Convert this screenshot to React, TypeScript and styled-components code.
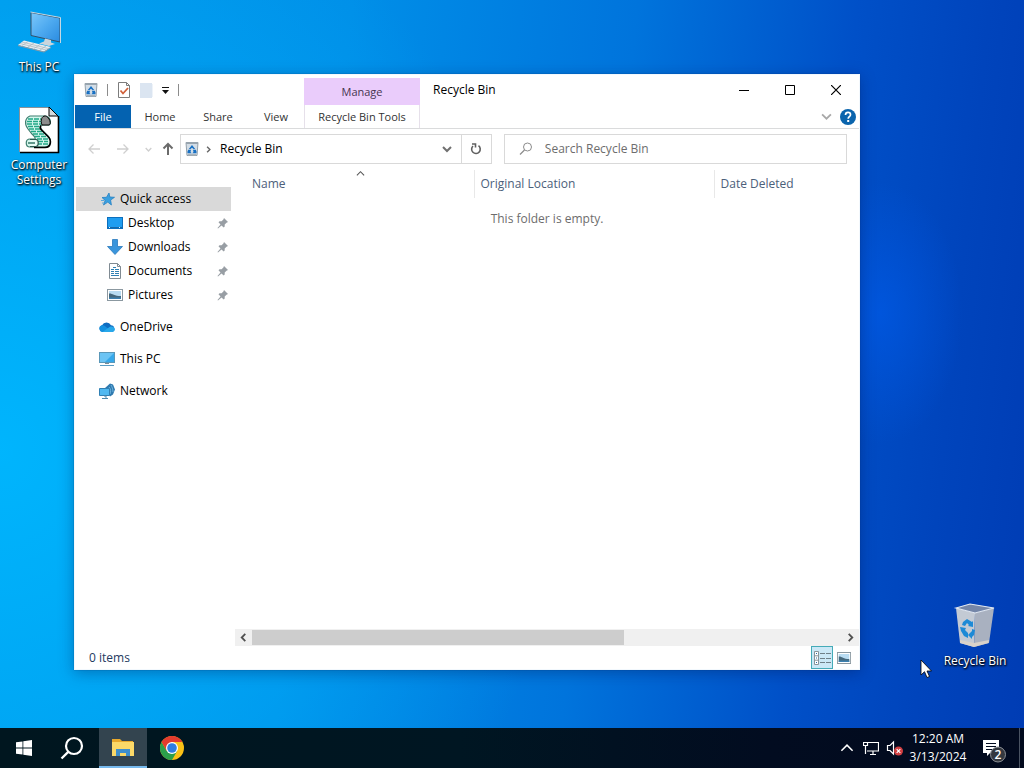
import React from "react";
import styled, { createGlobalStyle, css } from "styled-components";

const GlobalStyle = createGlobalStyle`
  *, *::before, *::after { box-sizing: border-box; }
  html, body, #root { height: 100%; }
  body {
    margin: 0;
    overflow: hidden;
    font-family: "Open Sans", "Noto Sans", "Liberation Sans", sans-serif;
    font-size: 12px;
    line-height: 16px;
    color: #000;
  }
  button, input { font: inherit; color: inherit; }
  svg { display: block; flex: none; }
`;

const Screen = styled.div`
  display: flex;
  flex-direction: column;
  height: 100vh;
`;

const Desktop = styled.main`
  position: relative;
  flex: 1;
  min-height: 0;
  background:
    radial-gradient(ellipse 8% 18% at 86% 43%, rgba(0, 92, 236, 0.6), rgba(0, 92, 236, 0) 100%),
    radial-gradient(ellipse 55% 85% at 0% 62%, rgba(0, 184, 255, 0.9), rgba(0, 184, 255, 0) 100%),
    linear-gradient(96deg, #0098ea 0%, #008fe8 32%, #0074dc 58%, #0050c8 78%, #0044bc 90%, #003cb4 100%);
`;

const Shortcut = styled.button<{ $spot: "pc" | "settings" | "bin" }>`
  position: absolute;
  display: flex;
  flex-direction: column;
  align-items: center;
  gap: 3px;
  width: 74px;
  padding: 0;
  border: 0;
  background: none;
  color: #fff;
  line-height: 15px;
  text-shadow: 1px 1px 2px #000, 0 1px 2px #000;
  ${({ $spot }) =>
    $spot === "pc"
      ? css`left: 2px; top: 8px;`
      : $spot === "settings"
      ? css`left: 2px; top: 106px;`
      : css`right: 12px; bottom: 60px;`}
`;

const Pointer = styled.div`
  position: absolute;
  right: 92px;
  bottom: 49px;
`;

const Window = styled.section`
  position: absolute;
  left: 74px;
  right: 164px;
  top: 74px;
  bottom: 58px;
  display: flex;
  flex-direction: column;
  border: 1px solid #f2f8fd;
  background: #fff;
  box-shadow: 0 0 1px rgba(0, 40, 100, 0.6), 0 3px 14px rgba(0, 20, 80, 0.35);
`;

const Ribbon = styled.header`
  display: grid;
  grid-template-columns: 229px 116px 1fr;
  grid-template-rows: 30px 23px;
  border-bottom: 1px solid #dadbdc;
`;

const QuickBar = styled.div`
  display: flex;
  align-items: center;
  gap: 9px;
  padding-left: 9px;
`;

const Divider = styled.span`
  width: 1px;
  height: 12px;
  background: #8c8c8c;
`;

const PlainButton = styled.button<{ $width?: number }>`
  display: flex;
  align-items: center;
  justify-content: center;
  width: ${({ $width }) => ($width ? `${$width}px` : "auto")};
  padding: 0;
  border: 0;
  background: none;
`;

const Tabs = styled.nav`
  grid-row: 2;
  display: flex;
`;

const Tab = styled.button<{ $active?: boolean }>`
  flex: 0 0 ${({ $active }) => ($active ? 56 : 58)}px;
  padding: 0;
  border: 0;
  background: ${({ $active }) => ($active ? "#0462b0" : "none")};
  color: ${({ $active }) => ($active ? "#fff" : "#333")};
  font-size: 11px;
`;

const Contextual = styled.div`
  grid-column: 2;
  grid-row: 1 / 3;
  display: flex;
  flex-direction: column;
  padding-top: 3px;
`;

const ContextGroup = styled.div`
  flex: 0 0 27px;
  background: #eaccfb;
  color: #46354f;
  font-size: 11px;
  line-height: 27px;
  text-align: center;
`;

const ContextTab = styled.button`
  flex: 1;
  padding: 0;
  border: 1px solid #e6e0ea;
  border-width: 0 1px;
  background: #fff;
  color: #333;
  font-size: 11px;
`;

const TitleRow = styled.div`
  grid-column: 3;
  display: flex;
`;

const Title = styled.h1`
  flex: 1;
  margin: 0;
  padding-left: 13px;
  font-size: 12px;
  font-weight: 400;
  line-height: 30px;
`;

const HelpRow = styled.div`
  grid-column: 3;
  display: flex;
  align-items: center;
  justify-content: flex-end;
  gap: 8px;
  padding-right: 3px;
`;

const AddressRow = styled.div`
  display: flex;
  flex: 0 0 41px;
  align-items: center;
  padding: 0 12px 1px 5px;
`;

const AddressBox = styled.div`
  display: flex;
  flex: 316 1 0;
  align-items: center;
  height: 30px;
  margin: 0 12px 0 2px;
  padding-left: 4px;
  border: 1px solid #d9d9d9;
`;

const Crumb = styled.span`
  flex: 1;
  padding-left: 3px;
`;

const RefreshCell = styled.div`
  display: flex;
  justify-content: center;
  align-self: stretch;
  width: 30px;
  border-left: 1px solid #d9d9d9;
`;

const SearchBox = styled.label`
  display: flex;
  flex: 338 1 0;
  align-items: center;
  gap: 12px;
  height: 30px;
  padding-left: 14px;
  border: 1px solid #d9d9d9;
`;

const SearchInput = styled.input`
  flex: 1;
  min-width: 0;
  padding: 0;
  border: 0;
  outline: 0;
  background: none;
  &::placeholder { color: #6d6d6d; opacity: 1; }
`;

const Body = styled.div`
  display: flex;
  flex: 1;
  min-height: 0;
`;

const Sidebar = styled.nav`
  flex: 0 0 160px;
  padding: 17px 4px 0 1px;
`;

const NavList = styled.ul`
  margin: 0;
  padding: 0;
  list-style: none;
`;

const NavItem = styled.li<{ $spaced?: boolean }>`
  margin-top: ${({ $spaced }) => ($spaced ? 8 : 0)}px;
`;

const NavLink = styled.a<{ $child?: boolean; $selected?: boolean }>`
  display: flex;
  align-items: center;
  gap: 5px;
  height: 24px;
  padding-left: ${({ $child }) => ($child ? 31 : 23)}px;
  padding-right: 2px;
  background: ${({ $selected }) => ($selected ? "#d9d9d9" : "none")};
  color: #000;
  text-decoration: none;
`;

const NavText = styled.span`
  flex: 1;
`;

const Content = styled.div`
  display: flex;
  flex: 1;
  flex-direction: column;
  min-width: 0;
`;

const Files = styled.table`
  margin-left: 11px;
  border-collapse: collapse;
  table-layout: fixed;
`;

const Heading = styled.th<{ $width?: number }>`
  position: relative;
  width: ${({ $width }) => ($width ? `${$width}px` : "auto")};
  height: 28px;
  padding: 0 6px;
  border-right: ${({ $width }) => ($width ? "1px solid #e8e8e8" : "0")};
  color: #4c607a;
  font-weight: 400;
  text-align: left;
`;

const SortMark = styled.span`
  position: absolute;
  top: -1px;
  left: 50%;
  margin-left: -4px;
`;

const Empty = styled.p`
  flex: 1;
  margin: 0;
  padding-top: 13px;
  color: #6d6d6d;
  text-align: center;
`;

const ScrollBar = styled.div`
  display: flex;
  height: 17px;
  background: #f0f0f0;
`;

const Track = styled.div`
  flex: 1;
  display: flex;
`;

const Thumb = styled.div`
  width: 63%;
  margin: 1px 0;
  background: #cdcdcd;
`;

const StatusBar = styled.footer`
  display: flex;
  flex: 0 0 23px;
  align-items: center;
  padding: 0 4px 0 14px;
  color: #1e3a5f;
`;

const StatusText = styled.span`
  flex: 1;
`;

const ViewButton = styled.button<{ $on?: boolean }>`
  display: flex;
  align-items: center;
  justify-content: center;
  width: 22px;
  height: 23px;
  padding: 0;
  border: 1px solid ${({ $on }) => ($on ? "#45abb8" : "transparent")};
  background: ${({ $on }) => ($on ? "#cbe8f6" : "none")};
`;

const Taskbar = styled.footer`
  display: flex;
  flex: 0 0 40px;
  align-items: stretch;
  background: linear-gradient(90deg, #00161f 0%, #001622 45%, #020c20 75%, #020a1e 100%);
  color: #fff;
`;

const TaskGroup = styled.div<{ $gap: number }>`
  display: flex;
  gap: ${({ $gap }) => $gap}px;
  margin-right: 3px;
`;

const TaskButton = styled.button<{ $active?: boolean }>`
  display: flex;
  align-items: center;
  justify-content: center;
  width: 48px;
  padding: 0;
  border: 0;
  background: ${({ $active }) => ($active ? "#33444f" : "none")};
  box-shadow: ${({ $active }) => ($active ? "inset 0 -2px 0 #76b9ed" : "none")};
`;

const Tray = styled.div`
  display: flex;
  flex: 1;
  align-items: stretch;
  justify-content: flex-end;
`;

const Clock = styled.time`
  width: 62px;
  padding-top: 2px;
  line-height: 18px;
  text-align: center;
`;

const ShowDesktop = styled.button`
  width: 5px;
  padding: 0;
  border: 0;
  border-left: 1px solid #4a5362;
  background: none;
`;

const SmallBin = () => (
  <svg width="14" height="16" viewBox="0 0 14 16" aria-hidden="true">
    <path d="M1 1.500h12l-1 13H2z" fill="#d3dde6" stroke="#94a0aa" strokeWidth="1" />
    <path d="M1 1h12v2H1z" fill="#98a4ae" />
    <path d="M3 13h8v1.500H3z" fill="#a9b4bd" />
    <path d="M7 4 10.200 8H8.500L7 6.800 5.500 8H3.800zM3.200 8.800h2.800L5.500 11l1.200 1.200H3l-.7-1zM10.800 8.800H8l.5 2.200-1.200 1.200H11l.7-1z" fill="#1770c4" />
  </svg>
);

const Chevron = ({ dir = "down", size = 9, color = "#666", weight = 2 }: { dir?: "down" | "up" | "left" | "right"; size?: number; color?: string; weight?: number }) => {
  const turn = { down: 0, left: 90, up: 180, right: 270 }[dir];
  return (
    <svg width={size} height={size} viewBox="0 0 10 10" aria-hidden="true">
      <path d="M1 3l4 4 4-4" fill="none" stroke={color} strokeWidth={weight} transform={`rotate(${turn} 5 5)`} />
    </svg>
  );
};

const Arrow = ({ dir, color }: { dir: "left" | "right" | "up"; color: string }) => {
  const turn = { left: 0, up: 90, right: 180 }[dir];
  return (
    <svg width="14" height="14" viewBox="0 0 14 14" aria-hidden="true">
      <path d="M13 7H2M6.500 2.500 2 7l4.500 4.500" fill="none" stroke={color} strokeWidth={dir === "up" ? 2 : 1.3} transform={`rotate(${turn} 7 7)`} />
    </svg>
  );
};

const Pin = () => (
  <svg width="12" height="12" viewBox="0 0 12 12" aria-hidden="true">
    <path d="M7 1 11 5l-1.500.7-1.800 1.800 0 2.100-1 1L4.500 8.500 1 11.500.5 11 3.500 7.500 1.500 5.300l1-1h2.100l1.800-1.800z" fill="#989ea4" />
  </svg>
);

const MonitorIcon = () => (
  <svg width="16" height="16" viewBox="0 0 16 16" aria-hidden="true">
    <rect x="0.500" y="1.500" width="15" height="10" fill="#36a8ea" stroke="#5a97b8" />
    <path d="M1 2h14L6 11H1z" fill="#6cc4f4" />
    <path d="M6 12h4v1H6z" fill="#7b8b96" />
    <path d="M1 14.500h14" stroke="#5a9cc4" />
  </svg>
);

const PictureIcon = ({ width = 16 }: { width?: number }) => (
  <svg width={width} height="12" viewBox="0 0 16 12" preserveAspectRatio="none" aria-hidden="true">
    <rect x="0.500" y="0.500" width="15" height="11" fill="#fff" stroke="#8b98a0" />
    <rect x="2" y="2" width="12" height="8" fill="#b9dcf2" />
    <path d="M2 4.500c3-.5 5 2.500 12 2.500v3H2z" fill="#46687c" />
    <path d="M2 8.500h12V10H2z" fill="#3c80b0" />
  </svg>
);

const navIcons: Record<string, React.ReactNode> = {
  star: (
    <svg width="16" height="16" viewBox="0 0 16 16" aria-hidden="true">
      <path d="M10 2l.8 4 4.700.3-3.900 2.700.8 5-3.600-2.900L4.500 14l1.600-4.600L3 6.500l4.500-.2z" fill="#3aa0e0" stroke="#2680c2" strokeWidth="0.800" />
      <path d="M2 9.500h3M3 12h2" stroke="#5aa8dc" />
    </svg>
  ),
  desktop: (
    <svg width="16" height="16" viewBox="0 0 16 16" aria-hidden="true">
      <rect x="0.500" y="2.500" width="15" height="11" fill="#1f9df0" stroke="#0c6fbd" />
      <path d="M1 12.500h14" stroke="#1768a8" />
      <path d="M2 12.500h1M12 12.500h1" stroke="#d8efff" />
    </svg>
  ),
  down: (
    <svg width="16" height="16" viewBox="0 0 16 16" aria-hidden="true">
      <path d="M5.500.5h5v7h5L8 15.500.5 7.500h5z" fill="#3a95dc" stroke="#2a7abd" strokeWidth="0.800" />
    </svg>
  ),
  doc: (
    <svg width="16" height="16" viewBox="0 0 16 16" aria-hidden="true">
      <path d="M2.500.5h8l3 3v12h-11z" fill="#fff" stroke="#808b93" />
      <path d="M10.500.5v3h3" fill="none" stroke="#808b93" />
      <path d="M4 6.500h3M8 6.500h4M4 8.500h3M8 8.500h4M4 10.500h3M8 10.500h4M4 12.500h8M6 4.500h3" stroke="#2f80b4" />
    </svg>
  ),
  picture: <PictureIcon />,
  cloud: (
    <svg width="16" height="16" viewBox="0 0 16 16" aria-hidden="true">
      <path d="M3.500 13A3.500 3.500 0 0 1 3 6.200 5 5 0 0 1 12 6.200 3.500 3.500 0 0 1 13 13z" fill="#0f6cc0" />
      <path d="M3.500 13A3.500 3.500 0 0 1 1 7.500c2-2 4-1 5.500 0L13.500 12.900z" fill="#1490df" />
      <path d="M3.500 13 10.500 8c1.500-1 5.500-.3 5.400 2.500C15.800 12 14.500 13 13 13z" fill="#28a8ea" />
    </svg>
  ),
  pc: <MonitorIcon />,
  network: (
    <svg width="16" height="16" viewBox="0 0 16 16" aria-hidden="true">
      <path d="M6 5 11 0.500l3 1 2 5-2 5-3 2z" fill="#2f7ab0" />
      <path d="M10 4c2 2 2 5 1 7M12 2c1 2 2 4 2 7" fill="none" stroke="#6fb4de" />
      <path d="M0.500 5.500h10v7h-10z" fill="#50b8f0" stroke="#3080b4" />
      <path d="M5 13h2v2M3 15.500h6" fill="none" stroke="#4c88ac" />
    </svg>
  ),
};

const navItems = [
  { label: "Quick access", icon: "star", selected: true },
  { label: "Desktop", icon: "desktop", child: true },
  { label: "Downloads", icon: "down", child: true },
  { label: "Documents", icon: "doc", child: true },
  { label: "Pictures", icon: "picture", child: true },
  { label: "OneDrive", icon: "cloud", spaced: true },
  { label: "This PC", icon: "pc", spaced: true },
  { label: "Network", icon: "network", spaced: true },
];

const ComputerArt = () => (
  <svg width="48" height="48" viewBox="0 0 48 48" aria-hidden="true">
    <defs>
      <linearGradient id="glass" x1="0" y1="0" x2="1" y2="1">
        <stop offset="0" stopColor="#7cc8fa" />
        <stop offset="0.500" stopColor="#4eaaf0" />
        <stop offset="1" stopColor="#2a8be0" />
      </linearGradient>
    </defs>
    <path d="M16 4.500 45 10v24L16 27.500z" fill="url(#glass)" stroke="#33516a" />
    <path d="M15.500 4 45.500 9.500V35" fill="none" stroke="#c4d8e4" />
    <path d="M30 30.500l6 1.500v2.500l4 1.500-6 2-10-2.500 5-2z" fill="#cbd5dc" />
    <path d="M9 32.500 36 39 29 43.500 3 37z" fill="#e8edf0" />
    <path d="M3 37l26 6.500v1L3 38zM29 43.500l7-4.500v1l-7 4.500z" fill="#8f9ba4" />
    <path d="M7 34l26 6.500M5 35.500l26 6.500M13 33.500l-6 4M19 35l-6 4M25 36.500l-6 4M31 38l-6 4" stroke="#a8b4bc" strokeWidth="0.700" />
  </svg>
);

const ScriptArt = () => (
  <svg width="48" height="48" viewBox="0 0 48 48" aria-hidden="true">
    <path d="M5 1h29l9 9v36H5z" fill="#fff" />
    <path d="M4.500 46V1.500H34" fill="none" stroke="#8a9299" />
    <path d="M43.500 10v36.500H5" fill="none" stroke="#000" strokeWidth="1.600" />
    <path d="M34 1l9 9h-9z" fill="#d5dadd" stroke="#000" />
    <path d="M15 10h15c5 0 7 7 4 9h-6c-3 0-3 3-1 5l6 6c4 4 3 11-3 11H15c-5 0-5-8 0-8h5c1-1-1-3-3-5l-4-5c-4-5-3-11 2-13z" fill="#d4f6ec" stroke="#3f7f70" strokeWidth="1.200" />
    <path d="M13 13h13M12 15.500h14M12 18h14M13 20.500h12M14 23h11M16 25.500h11M18 28h12M20 30.500h12M22 33h11M23 35.500h10M22 38h11" stroke="#22a886" strokeWidth="1.300" strokeDasharray="5 1" />
    <path d="M27 19c-2-5 0-9 3-9 4 0 7 8 4 9z" fill="#8c8c8c" stroke="#000" />
    <path d="M26 19.500c-2 2 0 4 1 5l6 6c4 4 3 11-3 11H19" fill="none" stroke="#000" strokeWidth="1.600" />
    <path d="M15 33.500h6c3 0 3 7 0 7h-6" fill="#e6fbf5" stroke="#2b5a50" strokeWidth="1.200" />
    <path d="M13 37h7" stroke="#3f7f70" strokeWidth="1.600" />
  </svg>
);

const BinArt = () => (
  <svg width="48" height="48" viewBox="0 0 48 48" aria-hidden="true">
    <path d="M5 6 24 11 23 45 9 41z" fill="#c3cad4" />
    <path d="M24 11 43 6l-5 35-15 4z" fill="#a9b1c0" />
    <path d="M5 6 19 2l24 4-19 5z" fill="#7486a8" stroke="#e4eaf2" strokeWidth="1.200" />
    <path d="M9 38l14 3 15-3-.5 3L23 45 9 41z" fill="#d8d2ca" />
    <path d="M12 20l4-3 5 3 1-1v6l-5-1 1-1-2-2-2 3-3-1zM9 25l6 1-1 2 3 3v5l-4-2-3-5zM21 27l3 1-1 5-2 2v2l-4-4 4-4z" fill="#1d8ad6" />
  </svg>
);

export default function App() {
  return (
    <>
      <GlobalStyle />
      <Screen>
        <Desktop>
          <Shortcut $spot="pc"><ComputerArt />This PC</Shortcut>
          <Shortcut $spot="settings"><ScriptArt />Computer Settings</Shortcut>
          <Shortcut $spot="bin"><BinArt />Recycle Bin</Shortcut>

          <Window aria-label="Recycle Bin">
            <Ribbon>
              <QuickBar>
                <SmallBin />
                <Divider />
                <PlainButton aria-label="Properties">
                  <svg width="14" height="16" viewBox="0 0 14 16" aria-hidden="true">
                    <path d="M1.500.5h8l3 3v12h-11z" fill="#fff" stroke="#7c7c7c" />
                    <path d="M9.500.5v3h3" fill="none" stroke="#7c7c7c" />
                    <path d="M3.500 8.500l2.500 3L11 6" fill="none" stroke="#d0603a" strokeWidth="1.800" />
                  </svg>
                </PlainButton>
                <PlainButton aria-label="New folder">
                  <svg width="13" height="16" viewBox="0 0 13 16" aria-hidden="true">
                    <path d="M0 1h12v15H0z" fill="#dbe5f1" />
                    <path d="M12 2h1v13h-1z" fill="#eef3f9" />
                  </svg>
                </PlainButton>
                <PlainButton aria-label="Customize Quick Access Toolbar">
                  <svg width="7" height="8" viewBox="0 0 7 8" aria-hidden="true">
                    <path d="M0 1h7v1H0zM0 4h7L3.500 8z" fill="#111" />
                  </svg>
                </PlainButton>
                <Divider />
              </QuickBar>
              <Tabs aria-label="Ribbon tabs">
                <Tab $active>File</Tab>
                <Tab>Home</Tab>
                <Tab>Share</Tab>
                <Tab>View</Tab>
              </Tabs>
              <Contextual>
                <ContextGroup>Manage</ContextGroup>
                <ContextTab>Recycle Bin Tools</ContextTab>
              </Contextual>
              <TitleRow>
                <Title>Recycle Bin</Title>
                <PlainButton $width={46} aria-label="Minimize">
                  <svg width="10" height="10" viewBox="0 0 10 10" aria-hidden="true"><path d="M0 5.500h10" stroke="#000" /></svg>
                </PlainButton>
                <PlainButton $width={46} aria-label="Maximize">
                  <svg width="10" height="10" viewBox="0 0 10 10" aria-hidden="true"><path d="M.5.5h9v9h-9z" fill="none" stroke="#000" /></svg>
                </PlainButton>
                <PlainButton $width={46} aria-label="Close">
                  <svg width="10" height="10" viewBox="0 0 10 10" aria-hidden="true"><path d="M0 0l10 10M10 0 0 10" stroke="#000" strokeWidth="1.200" /></svg>
                </PlainButton>
              </TitleRow>
              <HelpRow>
                <PlainButton aria-label="Expand the Ribbon"><Chevron size={11} color="#a8a8a8" weight={1.6} /></PlainButton>
                <PlainButton aria-label="Help">
                  <svg width="16" height="16" viewBox="0 0 16 16" aria-hidden="true">
                    <circle cx="8" cy="8" r="8" fill="#0a64ad" />
                    <path d="M5.500 6c0-3.500 5-3.200 5-.3 0 2-2.300 2-2.300 4" fill="none" stroke="#fff" strokeWidth="1.700" />
                    <rect x="7.200" y="11" width="2" height="2" fill="#fff" />
                  </svg>
                </PlainButton>
              </HelpRow>
            </Ribbon>

            <AddressRow>
              <PlainButton $width={28} aria-label="Back"><Arrow dir="left" color="#cfcfcf" /></PlainButton>
              <PlainButton $width={30} aria-label="Forward"><Arrow dir="right" color="#cfcfcf" /></PlainButton>
              <PlainButton $width={20} aria-label="Recent locations"><Chevron size={7} color="#cfcfcf" /></PlainButton>
              <PlainButton $width={20} aria-label="Up"><Arrow dir="up" color="#6b6b6b" /></PlainButton>
              <AddressBox>
                <SmallBin />
                <PlainButton $width={18} aria-label="Locations"><Chevron dir="right" size={7} color="#666" /></PlainButton>
                <Crumb>Recycle Bin</Crumb>
                <PlainButton $width={28} aria-label="Previous locations"><Chevron size={10} color="#707070" /></PlainButton>
                <RefreshCell>
                  <PlainButton aria-label="Refresh">
                    <svg width="12" height="12" viewBox="0 0 12 12" aria-hidden="true">
                      <path d="M3 3A4.300 4.300 0 1 0 8.500 2.700M2 1h3.500v3.500" fill="none" stroke="#606060" strokeWidth="1.600" />
                    </svg>
                  </PlainButton>
                </RefreshCell>
              </AddressBox>
              <SearchBox>
                <svg width="14" height="14" viewBox="0 0 14 14" aria-hidden="true">
                  <circle cx="8.500" cy="5" r="4" fill="none" stroke="#8c8c8c" />
                  <path d="M5.500 8 1 12.500" stroke="#8c8c8c" strokeWidth="1.200" />
                </svg>
                <SearchInput type="text" placeholder="Search Recycle Bin" aria-label="Search Recycle Bin" />
              </SearchBox>
            </AddressRow>

            <Body>
              <Sidebar aria-label="Navigation pane">
                <NavList>
                  {navItems.map((item) => (
                    <NavItem key={item.label} $spaced={item.spaced}>
                      <NavLink href="#" $child={item.child} $selected={item.selected}>
                        {navIcons[item.icon]}
                        <NavText>{item.label}</NavText>
                        {item.child && <Pin />}
                      </NavLink>
                    </NavItem>
                  ))}
                </NavList>
              </Sidebar>
              <Content>
                <Files>
                  <thead>
                    <tr>
                      <Heading $width={228}>
                        Name
                        <SortMark><Chevron dir="up" size={9} color="#555" weight={1.2} /></SortMark>
                      </Heading>
                      <Heading $width={240}>Original Location</Heading>
                      <Heading>Date Deleted</Heading>
                    </tr>
                  </thead>
                </Files>
                <Empty>This folder is empty.</Empty>
                <ScrollBar>
                  <PlainButton $width={17} aria-label="Scroll left"><Chevron dir="left" size={9} color="#505050" /></PlainButton>
                  <Track><Thumb /></Track>
                  <PlainButton $width={17} aria-label="Scroll right"><Chevron dir="right" size={9} color="#505050" /></PlainButton>
                </ScrollBar>
              </Content>
            </Body>

            <StatusBar>
              <StatusText>0 items</StatusText>
              <ViewButton $on aria-label="Details view">
                <svg width="17" height="14" viewBox="0 0 17 14" aria-hidden="true">
                  <path d="M.5.5h4v13h-4zM.5 4.800h4M.5 9.200h4" fill="#fff" stroke="#8a949a" />
                  <path d="M2 2.500h1M2 7h1M2 11.500h1" stroke="#2a6fa8" />
                  <path d="M6 2.500h5M12 2.500h5M6 7.500h5M12 7.500h5M6 11.500h5M12 11.500h5" stroke="#6f8088" />
                </svg>
              </ViewButton>
              <ViewButton aria-label="Large thumbnails view"><PictureIcon width={14} /></ViewButton>
            </StatusBar>
          </Window>

          <Pointer>
            <svg width="12" height="20" viewBox="0 0 12 20" aria-hidden="true">
              <path d="M1 1v15l3.500-3.300L7 18.500l2.500-1L7 12h4.500z" fill="#fff" stroke="#000" strokeWidth="0.800" />
            </svg>
          </Pointer>
        </Desktop>

        <Taskbar>
          <TaskGroup $gap={0}>
            <TaskButton aria-label="Start">
              <svg width="16" height="16" viewBox="0 0 16 16" aria-hidden="true">
                <path d="M0 2.300 6.500 1.400v6.200H0zM7.300 1.300 16 0v7.600H7.300zM0 8.400h6.500v6.200L0 13.700zM7.300 8.400H16V16l-8.700-1.300z" fill="#fff" />
              </svg>
            </TaskButton>
            <TaskButton aria-label="Search">
              <svg width="24" height="24" viewBox="0 0 24 24" aria-hidden="true">
                <circle cx="14" cy="10" r="8" fill="none" stroke="#fff" strokeWidth="2.200" />
                <path d="M8.500 15.700 1.500 22.500" stroke="#fff" strokeWidth="2.400" />
              </svg>
            </TaskButton>
          </TaskGroup>
          <TaskGroup $gap={1}>
            <TaskButton $active aria-label="File Explorer">
              <svg width="22" height="20" viewBox="0 0 22 20" aria-hidden="true">
                <path d="M0 1h8l2 2h11v6H0z" fill="#e8a92c" />
                <path d="M0 4h22v14H0z" fill="#fbd968" />
                <path d="M4 11h14v7h-4v-3H8v3H4z" fill="#3f8fcb" />
                <path d="M8 15h6v3H8z" fill="#fbd968" />
              </svg>
            </TaskButton>
            <TaskButton aria-label="Google Chrome">
              <svg width="24" height="24" viewBox="0 0 24 24" aria-hidden="true">
                <circle cx="12" cy="12" r="12" fill="#fbc116" />
                <path d="M1.600 6A12 12 0 0 0 12 24l5.200-9H12L6.800 15z" fill="#2c9f4b" />
                <path d="M1.600 6A12 12 0 0 1 22.400 6H12L6.800 15z" fill="#e33b2e" />
                <circle cx="12" cy="12" r="6" fill="#fff" />
                <circle cx="12" cy="12" r="4.800" fill="#2f7de1" />
              </svg>
            </TaskButton>
          </TaskGroup>
          <Tray>
            <PlainButton $width={24} aria-label="Show hidden icons"><Chevron dir="up" size={14} color="#fff" weight={1.1} /></PlainButton>
            <PlainButton $width={24} aria-label="Network">
              <svg width="16" height="15" viewBox="0 0 16 15" aria-hidden="true">
                <path d="M5 1.500h10.500v8.500H4M.5 1.500h4v3h-4zM2.500 4.500v8.500M7 13.500h6M10 10v3" fill="none" stroke="#fff" strokeWidth="1.200" />
              </svg>
            </PlainButton>
            <PlainButton $width={24} aria-label="Volume muted">
              <svg width="18" height="16" viewBox="0 0 18 16" aria-hidden="true">
                <path d="M1.500 5.500H4L7.500 2v12L4 10.500H1.500z" fill="none" stroke="#fff" strokeWidth="1.200" />
                <circle cx="12.500" cy="11" r="4.500" fill="#d13f42" />
                <path d="M10.700 9.200l3.600 3.600M14.300 9.200l-3.600 3.600" stroke="#fff" strokeWidth="1.200" />
              </svg>
            </PlainButton>
            <Clock dateTime="2024-03-13T00:20">12:20 AM<br />3/13/2024</Clock>
            <PlainButton $width={50} aria-label="2 new notifications">
              <svg width="26" height="30" viewBox="0 -4 26 30" aria-hidden="true">
                <path d="M2 3h16v13h-9l-3 3v-3H2z" fill="#fff" />
                <path d="M5 6.500h10M5 9.500h10M5 12.500h7" stroke="#020c20" strokeWidth="1.200" />
                <circle cx="17" cy="17.500" r="7.500" fill="#34383f" stroke="#8c9096" />
                <text x="17" y="22" textAnchor="middle" fontSize="12" fontWeight="600" fill="#fff">2</text>
              </svg>
            </PlainButton>
            <ShowDesktop aria-label="Show desktop" />
          </Tray>
        </Taskbar>
      </Screen>
    </>
  );
}
